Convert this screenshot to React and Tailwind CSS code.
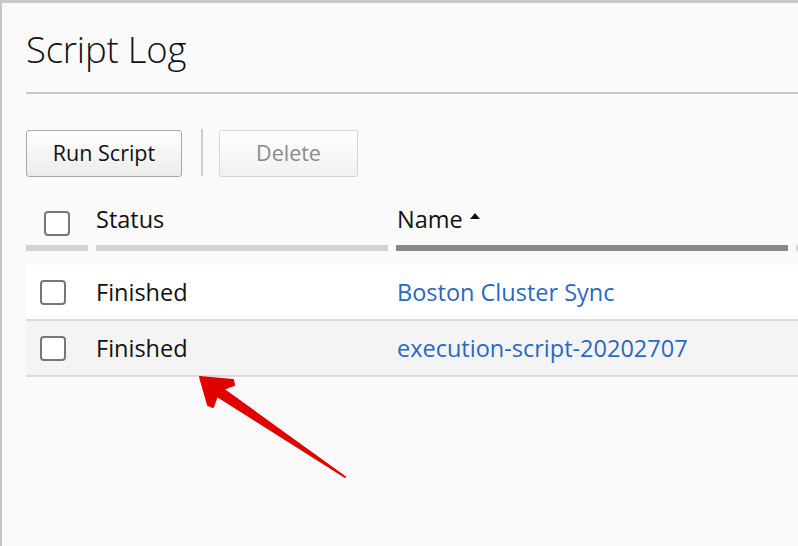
import React from 'react';

const rows = [
  { status: 'Finished', name: 'Boston Cluster Sync', bg: 'bg-white' },
  { status: 'Finished', name: 'execution-script-20202707', bg: 'bg-[#f4f4f4]' },
];

function Box({ className = '' }) {
  return <span className={`block w-[26px] h-[25px] rounded-[4px] border-2 border-[#777] bg-white ${className}`} />;
}

export default function App() {
  return (
    <div className="relative w-[798px] h-[546px] overflow-hidden bg-[#fafafa] text-[#111] font-['Open_Sans',sans-serif]">
      <div className="h-[3px] bg-[#c9c9c9]" />
      <div className="flex h-[543px]">
        <div className="w-[2px] bg-[#c6c6c6]" />
        <div className="flex-1 pl-[24px]">
          <h1 className="h-[89px] pt-[24px] text-[36.5px] font-light leading-[44px] tracking-[-0.2px]">Script Log</h1>
          <div className="h-[2px] bg-[#c8c8c8]" />

          <div className="flex items-center mt-[36px] h-[47px]">
            <button className="h-[47px] w-[156px] rounded-[3px] border border-[#a9a9a9] bg-gradient-to-b from-white to-[#ececec] text-[21.5px] text-[#111]">
              Run Script
            </button>
            <span className="ml-[19px] w-[2px] h-[47px] -mt-[3px] bg-[#cccccc]" />
            <button disabled className="ml-[16px] h-[47px] w-[139px] rounded-[3px] border border-[#d6d6d6] bg-gradient-to-b from-white to-[#f1f1f1] text-[21.5px] text-[#8a8a8a]">
              Delete
            </button>
          </div>

          <div className="flex mt-[18px] h-[56px]">
            <div className="w-[62px] mr-[8px] border-b-[6px] border-[#d2d2d2] flex items-center justify-center pt-[6px]">
              <Box />
            </div>
            <div className="w-[292px] mr-[8px] border-b-[6px] border-[#d2d2d2] flex items-center text-[23.5px]">Status</div>
            <div className="w-[392px] mr-[8px] border-b-[6px] border-[#888] flex items-center text-[23.5px] pl-[1px]">
              Name
              <svg width="12" height="8" viewBox="0 0 12 8" className="ml-[6px] -mt-[8px]">
                <path d="M6 1 L11 7 H1 Z" fill="#111" />
              </svg>
            </div>
            <div className="flex-1 border-b-[6px] border-[#d2d2d2]" />
          </div>

          <div className="mt-[14px]">
            {rows.map((r, i) => (
              <div key={i} className={`flex h-[56px] border-b-2 border-[#dddddd] ${r.bg}`}>
                <div className="w-[70px] flex items-center pl-[14px]">
                  <Box />
                </div>
                <div className="w-[300px] flex items-center text-[23.5px] pt-[2px]">{r.status}</div>
                <div className="flex-1 flex items-center text-[23.5px] text-[#2a68c6] pl-[1px] pt-[2px]">{r.name}</div>
              </div>
            ))}
          </div>
        </div>
      </div>

      <svg className="absolute left-0 top-0 pointer-events-none" width="798" height="546">
        <polygon
          points="200,377 233,380 234,385 223,389 345,477 217,396 213,407 208,405"
          fill="#e00000"
          stroke="#e00000"
          strokeWidth="2"
          strokeLinejoin="round"
        />
      </svg>
    </div>
  );
}
